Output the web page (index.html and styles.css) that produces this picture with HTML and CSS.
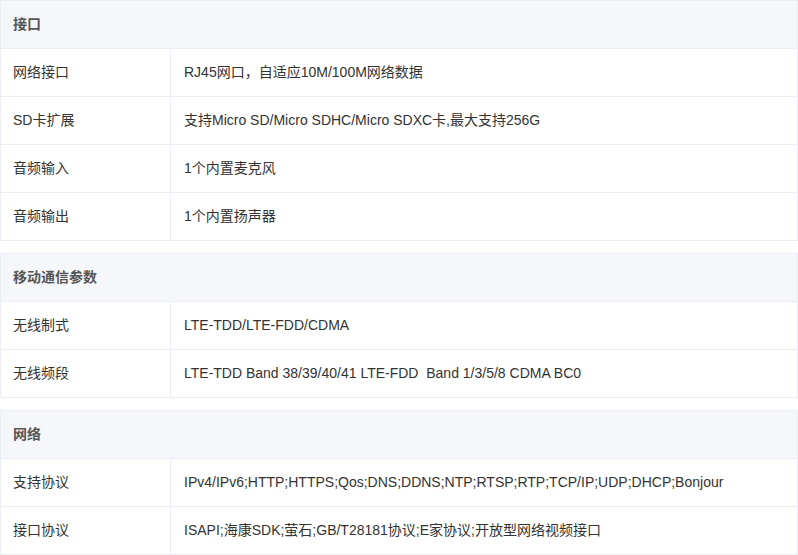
FILE: index.html
```html
<!DOCTYPE html>
<html lang="zh-CN">
<head>
    <meta charset="UTF-8">
    <title>参数</title>
    <link rel="stylesheet" href="styles.css">
</head>
<body>
    <table class="spec-table">
        <colgroup><col class="label-col"><col></colgroup>
        <tr><th colspan="2">接口</th></tr>
        <tr><td>网络接口</td><td>RJ45网口，自适应10M/100M网络数据</td></tr>
        <tr><td>SD卡扩展</td><td>支持Micro SD/Micro SDHC/Micro SDXC卡,最大支持256G</td></tr>
        <tr><td>音频输入</td><td>1个内置麦克风</td></tr>
        <tr><td>音频输出</td><td>1个内置扬声器</td></tr>
    </table>

    <table class="spec-table">
        <colgroup><col class="label-col"><col></colgroup>
        <tr><th colspan="2">移动通信参数</th></tr>
        <tr><td>无线制式</td><td>LTE-TDD/LTE-FDD/CDMA</td></tr>
        <tr><td>无线频段</td><td>LTE-TDD Band 38/39/40/41 LTE-FDD&nbsp; Band 1/3/5/8 CDMA BC0</td></tr>
    </table>

    <table class="spec-table">
        <colgroup><col class="label-col"><col></colgroup>
        <tr><th colspan="2">网络</th></tr>
        <tr><td>支持协议</td><td>IPv4/IPv6;HTTP;HTTPS;Qos;DNS;DDNS;NTP;RTSP;RTP;TCP/IP;UDP;DHCP;Bonjour</td></tr>
        <tr><td>接口协议</td><td>ISAPI;海康SDK;萤石;GB/T28181协议;E家协议;开放型网络视频接口</td></tr>
    </table>
</body>
</html>
```

FILE: styles.css
```css
body {
    margin: 0;
    background-color: #fff;
    font-family: 'Liberation Sans', 'Noto Sans CJK SC', sans-serif;
    font-size: 14px;
    color: #333;
}

.spec-table {
    width: 798px;
    border-collapse: collapse;
    table-layout: fixed;
    margin-bottom: 12px;
}

.label-col {
    width: 170px;
}

.spec-table th,
.spec-table td {
    border: 1px solid #ebeef5;
    height: 47px;
    line-height: 47px;
    padding: 0 12px;
    text-align: left;
    white-space: nowrap;
}

.spec-table th {
    background-color: #f5f7fa;
    color: #555;
    font-weight: bold;
}

.spec-table td + td {
    padding-left: 13px;
}
```
